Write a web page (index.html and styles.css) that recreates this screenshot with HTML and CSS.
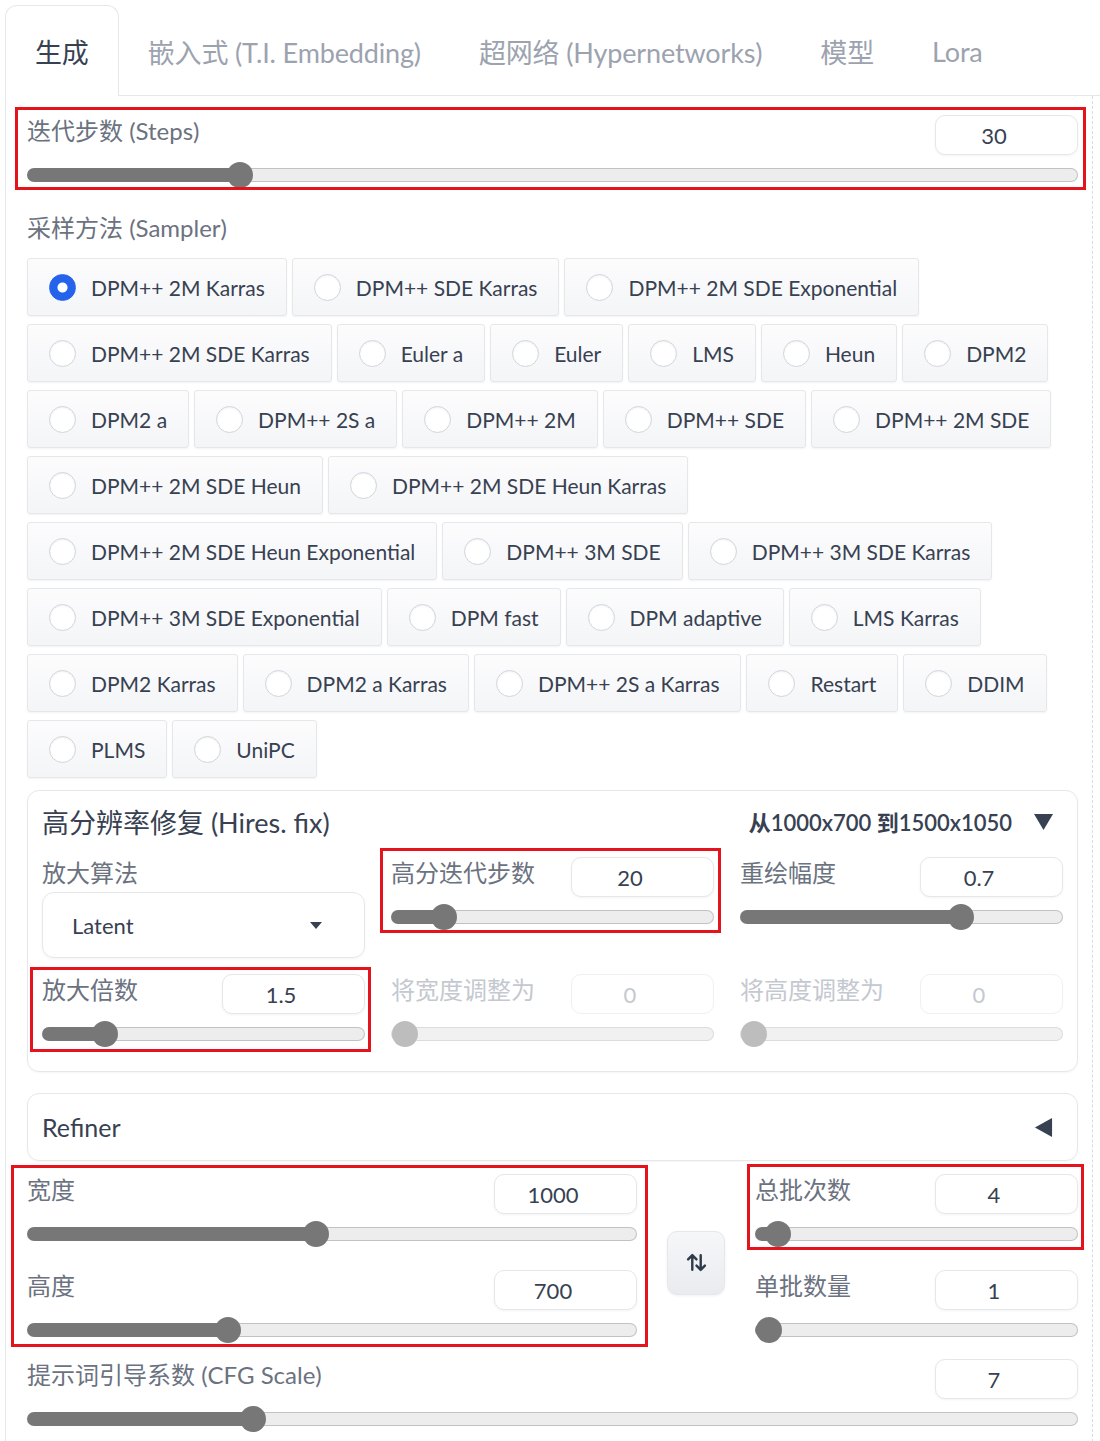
FILE: index.html
```html
<!DOCTYPE html>
<html lang="zh-CN">
  <head>
    <meta charset="UTF-8" />
    <meta name="viewport" content="width=device-width, initial-scale=1.0" />
    <title>txt2img</title>
    <link rel="stylesheet" href="styles.css">
  </head>
  <body>
    <div class="tabs">
      <button class="tab selected">生成</button>
      <button class="tab">嵌入式 (T.I. Embedding)</button>
      <button class="tab">超网络 (Hypernetworks)</button>
      <button class="tab">模型</button>
      <button class="tab">Lora</button>
    </div>

    <div class="tab-panel">
      <div class="slider-block mark mark-steps">
        <div class="slider-head">
          <span class="label">迭代步数 (Steps)</span>
          <input class="num" type="number" value="30" />
        </div>
        <input class="range" type="range" min="1" max="150" value="30" style="--f: 0.1946" />
      </div>

      <div class="label sampler-label">采样方法 (Sampler)</div>
      <div class="radios">
        <div class="radio-row">
          <label class="radio"><input type="radio" name="sampler" checked /><span>DPM++ 2M Karras</span></label>
          <label class="radio"><input type="radio" name="sampler" /><span>DPM++ SDE Karras</span></label>
          <label class="radio"><input type="radio" name="sampler" /><span>DPM++ 2M SDE Exponential</span></label>
        </div>
        <div class="radio-row">
          <label class="radio"><input type="radio" name="sampler" /><span>DPM++ 2M SDE Karras</span></label>
          <label class="radio"><input type="radio" name="sampler" /><span>Euler a</span></label>
          <label class="radio"><input type="radio" name="sampler" /><span>Euler</span></label>
          <label class="radio"><input type="radio" name="sampler" /><span>LMS</span></label>
          <label class="radio"><input type="radio" name="sampler" /><span>Heun</span></label>
          <label class="radio"><input type="radio" name="sampler" /><span>DPM2</span></label>
        </div>
        <div class="radio-row">
          <label class="radio"><input type="radio" name="sampler" /><span>DPM2 a</span></label>
          <label class="radio"><input type="radio" name="sampler" /><span>DPM++ 2S a</span></label>
          <label class="radio"><input type="radio" name="sampler" /><span>DPM++ 2M</span></label>
          <label class="radio"><input type="radio" name="sampler" /><span>DPM++ SDE</span></label>
          <label class="radio"><input type="radio" name="sampler" /><span>DPM++ 2M SDE</span></label>
        </div>
        <div class="radio-row">
          <label class="radio"><input type="radio" name="sampler" /><span>DPM++ 2M SDE Heun</span></label>
          <label class="radio"><input type="radio" name="sampler" /><span>DPM++ 2M SDE Heun Karras</span></label>
        </div>
        <div class="radio-row">
          <label class="radio"><input type="radio" name="sampler" /><span>DPM++ 2M SDE Heun Exponential</span></label>
          <label class="radio"><input type="radio" name="sampler" /><span>DPM++ 3M SDE</span></label>
          <label class="radio"><input type="radio" name="sampler" /><span>DPM++ 3M SDE Karras</span></label>
        </div>
        <div class="radio-row">
          <label class="radio"><input type="radio" name="sampler" /><span>DPM++ 3M SDE Exponential</span></label>
          <label class="radio"><input type="radio" name="sampler" /><span>DPM fast</span></label>
          <label class="radio"><input type="radio" name="sampler" /><span>DPM adaptive</span></label>
          <label class="radio"><input type="radio" name="sampler" /><span>LMS Karras</span></label>
        </div>
        <div class="radio-row">
          <label class="radio"><input type="radio" name="sampler" /><span>DPM2 Karras</span></label>
          <label class="radio"><input type="radio" name="sampler" /><span>DPM2 a Karras</span></label>
          <label class="radio"><input type="radio" name="sampler" /><span>DPM++ 2S a Karras</span></label>
          <label class="radio"><input type="radio" name="sampler" /><span>Restart</span></label>
          <label class="radio"><input type="radio" name="sampler" /><span>DDIM</span></label>
        </div>
        <div class="radio-row">
          <label class="radio"><input type="radio" name="sampler" /><span>PLMS</span></label>
          <label class="radio"><input type="radio" name="sampler" /><span>UniPC</span></label>
        </div>
      </div>

      <div class="accordion hires">
        <div class="accordion-head">
          <span class="accordion-title">高分辨率修复 (Hires. fix)</span>
          <span class="accordion-side">
            <span class="hires-size">从1000x700 到1500x1050</span>
            <svg class="toggle" viewBox="0 0 20 18"><polygon points="0,1 20,1 10,18" /></svg>
          </span>
        </div>
        <div class="hires-grid">
          <div class="field">
            <span class="label">放大算法</span>
            <div class="dropdown">
              <span>Latent</span>
              <svg class="caret" viewBox="0 0 12 7"><polygon points="0,0 12,0 6,7" /></svg>
            </div>
          </div>
          <div class="slider-block mark mark-hires-steps">
            <div class="slider-head">
              <span class="label">高分迭代步数</span>
              <input class="num" type="number" value="20" />
            </div>
            <input class="range" type="range" min="0" max="150" value="20" style="--f: 0.1333" />
          </div>
          <div class="slider-block">
            <div class="slider-head">
              <span class="label">重绘幅度</span>
              <input class="num" type="number" value="0.7" />
            </div>
            <input class="range" type="range" min="0" max="1" step="0.01" value="0.7" style="--f: 0.7" />
          </div>
          <div class="slider-block mark mark-upscale">
            <div class="slider-head">
              <span class="label">放大倍数</span>
              <input class="num" type="number" value="1.5" />
            </div>
            <input class="range" type="range" min="1" max="4" step="0.05" value="1.5" style="--f: 0.1667" />
          </div>
          <div class="slider-block disabled">
            <div class="slider-head">
              <span class="label">将宽度调整为</span>
              <input class="num" type="number" value="0" disabled />
            </div>
            <input class="range" type="range" min="0" max="2048" value="0" style="--f: 0" disabled />
          </div>
          <div class="slider-block disabled">
            <div class="slider-head">
              <span class="label">将高度调整为</span>
              <input class="num" type="number" value="0" disabled />
            </div>
            <input class="range" type="range" min="0" max="2048" value="0" style="--f: 0" disabled />
          </div>
        </div>
      </div>

      <div class="accordion refiner">
        <div class="accordion-head">
          <span class="accordion-title refiner-title">Refiner</span>
          <svg class="toggle" viewBox="0 0 18 20"><polygon points="18,0 18,20 0,10" /></svg>
        </div>
      </div>

      <div class="dims">
        <div class="stack mark mark-size">
          <div class="slider-block">
            <div class="slider-head">
              <span class="label">宽度</span>
              <input class="num" type="number" value="1000" />
            </div>
            <input class="range" type="range" min="64" max="2048" step="8" value="1000" style="--f: 0.4718" />
          </div>
          <div class="slider-block">
            <div class="slider-head">
              <span class="label">高度</span>
              <input class="num" type="number" value="700" />
            </div>
            <input class="range" type="range" min="64" max="2048" step="4" value="700" style="--f: 0.3206" />
          </div>
        </div>
        <button class="swap" title="Switch width/height">
          <svg viewBox="0 0 20 20">
            <path d="M6 17V3M2 7l4-4 4 4M14 3v14M10 13l4 4 4-4" />
          </svg>
        </button>
        <div class="stack">
          <div class="slider-block mark mark-batch">
            <div class="slider-head">
              <span class="label">总批次数</span>
              <input class="num" type="number" value="4" />
            </div>
            <input class="range" type="range" min="1" max="100" value="4" style="--f: 0.0303" />
          </div>
          <div class="slider-block">
            <div class="slider-head">
              <span class="label">单批数量</span>
              <input class="num" type="number" value="1" />
            </div>
            <input class="range" type="range" min="1" max="8" value="1" style="--f: 0" />
          </div>
        </div>
      </div>

      <div class="slider-block cfg">
        <div class="slider-head">
          <span class="label">提示词引导系数 (CFG Scale)</span>
          <input class="num" type="number" value="7" />
        </div>
        <input class="range" type="range" min="1" max="30" step="0.5" value="7" style="--f: 0.2069" />
      </div>
    </div>
  </body>
</html>
```

FILE: styles.css
```css
* {
  margin: 0;
  padding: 0;
  box-sizing: border-box;
}

body {
  width: 1100px;
  padding-top: 5px;
  background: #fff;
  color: #374151;
  font-family: Lato, "Noto Sans CJK SC", sans-serif;
}

button,
input {
  font-family: inherit;
  color: inherit;
}

/* tabs */

.tabs {
  display: flex;
  height: 91px;
  margin-left: 5px;
  border-bottom: 1px solid #e5e7eb;
}

.tab {
  height: 91px;
  margin-bottom: -1px;
  padding: 0 28px;
  border: 1px solid transparent;
  border-bottom: none;
  border-radius: 12px 12px 0 0;
  background: none;
  font-size: 27px;
  letter-spacing: -0.15px;
  color: #9ca3af;
}

.tab.selected {
  padding: 0 29px;
  border-color: #e5e7eb;
  background: #fff;
  color: #374151;
}

.tab-panel {
  width: 1088px;
  margin-left: 5px;
  padding: 19px 14px 10px 21px;
  border-left: 1px solid #e5e7eb;
  border-right: 1px dashed #d9dbe0;
}

/* labels, number boxes and sliders */

.label {
  font-size: 24px;
  line-height: 32px;
  color: #6b7280;
  white-space: nowrap;
}

.slider-block {
  padding-bottom: 6px;
}

.slider-head {
  display: flex;
  justify-content: space-between;
  align-items: flex-start;
}

.num {
  width: 143px;
  height: 40px;
  padding-right: 25px;
  border: 1px solid #e5e7eb;
  border-radius: 10px;
  background: #fff;
  box-shadow: 0 1px 3px rgba(0, 0, 0, 0.05);
  font-size: 22px;
  text-align: center;
  outline: none;
}

.num::-webkit-inner-spin-button,
.num::-webkit-outer-spin-button {
  -webkit-appearance: none;
  margin: 0;
}

.range {
  --fill: calc(14px + (100% - 28px) * var(--f));
  -webkit-appearance: none;
  appearance: none;
  display: block;
  width: 100%;
  height: 14px;
  margin-top: 13px;
  border: 1px solid transparent;
  border-radius: 7px;
  background:
    linear-gradient(#777, #777) 0 0 / var(--fill) 100% no-repeat border-box,
    linear-gradient(#ededed, #ededed) padding-box,
    linear-gradient(#c2c2c2, #c2c2c2) border-box;
  outline: none;
}

.range::-webkit-slider-thumb {
  -webkit-appearance: none;
  width: 26px;
  height: 26px;
  margin-top: -1px;
  border-radius: 50%;
  background: #777;
}

.disabled .label,
.disabled .num {
  color: #c4c8cf;
}

.disabled .num {
  border-color: #eef0f2;
  box-shadow: none;
}

.disabled .range {
  background:
    linear-gradient(#f1f1f1, #f1f1f1) padding-box,
    linear-gradient(#dcdcdc, #dcdcdc) border-box;
}

.disabled .range::-webkit-slider-thumb {
  background: #bdbdbd;
}

/* sampler */

.sampler-label {
  margin: 24px 0 14px;
}

.radios {
  display: flex;
  flex-direction: column;
  gap: 8px;
}

.radio-row {
  display: flex;
  gap: 5px;
}

.radio {
  display: flex;
  align-items: center;
  gap: 15px;
  height: 58px;
  padding: 0 21px;
  border: 1px solid #e5e7eb;
  border-radius: 3px;
  background: linear-gradient(#fcfcfd, #f4f5f7);
  box-shadow: 0 1px 2px rgba(0, 0, 0, 0.05);
  font-size: 21px;
  color: #374151;
  white-space: nowrap;
}

.radio input {
  -webkit-appearance: none;
  appearance: none;
  width: 27px;
  height: 27px;
  border: 1px solid #d1d5db;
  border-radius: 50%;
  background: #fff;
  box-shadow: inset 0 1px 2px rgba(0, 0, 0, 0.06);
}

.radio input:checked {
  border-color: #2563eb;
  background: radial-gradient(circle, #fff 0 4.5px, #2563eb 5.5px);
  box-shadow: none;
}

/* accordions */

.accordion {
  border: 1px solid #e5e7eb;
  border-radius: 12px;
  box-shadow: 0 1px 2px rgba(0, 0, 0, 0.04);
}

.accordion-head {
  display: flex;
  justify-content: space-between;
  align-items: center;
}

.accordion-title {
  font-size: 27px;
  color: #374151;
}

.accordion-side {
  display: flex;
  align-items: center;
  gap: 22px;
}

.hires-size {
  font-size: 22px;
  font-weight: 600;
  color: #374151;
}

.toggle {
  width: 19px;
  height: 19px;
  fill: #374151;
}

.hires {
  margin-top: 12px;
  padding: 12px 14px 24px;
}

.hires .accordion-head {
  height: 36px;
  padding-right: 10px;
}

.hires-grid {
  display: grid;
  grid-template-columns: repeat(3, 1fr);
  align-items: start;
  gap: 16px 26px;
  margin-top: 18px;
}

.dropdown {
  display: flex;
  justify-content: space-between;
  align-items: center;
  height: 66px;
  margin-top: 3px;
  padding: 0 42px 0 29px;
  border: 1px solid #e5e7eb;
  border-radius: 12px;
  box-shadow: 0 1px 3px rgba(0, 0, 0, 0.05);
  font-size: 22px;
}

.caret {
  width: 12px;
  height: 7px;
  fill: #374151;
}

.refiner {
  height: 68px;
  margin-top: 21px;
  padding: 0 24px 0 14px;
}

.refiner .accordion-head {
  height: 100%;
}

.refiner-title {
  font-size: 25px;
}

/* width / height / batch */

.dims {
  display: grid;
  grid-template-columns: 1fr 58px 323px;
  column-gap: 30px;
  margin-top: 13px;
}

.stack {
  display: flex;
  flex-direction: column;
  gap: 23px;
}

.swap {
  align-self: center;
  display: flex;
  align-items: center;
  justify-content: center;
  height: 64px;
  margin-top: 8px;
  border: 1px solid #e5e7eb;
  border-radius: 10px;
  background: linear-gradient(#f6f7f9, #e9ebef);
  box-shadow: 0 1px 3px rgba(0, 0, 0, 0.06);
}

.swap svg {
  width: 21px;
  height: 21px;
  fill: none;
  stroke: #2f3a4a;
  stroke-width: 2.3;
  stroke-linecap: round;
  stroke-linejoin: round;
}

.cfg {
  margin-top: 16px;
}

/* red annotation boxes drawn over the controls */

.mark {
  position: relative;
}

.mark::after {
  content: "";
  position: absolute;
  border: 3px solid #e3141c;
  pointer-events: none;
}

.mark-steps::after {
  top: -8px;
  right: -8px;
  bottom: -2px;
  left: -12px;
}

.mark-hires-steps::after {
  top: -9px;
  right: -7px;
  bottom: -3px;
  left: -11px;
}

.mark-upscale::after {
  top: -7px;
  right: -6px;
  bottom: -5px;
  left: -12px;
}

.mark-size::after {
  top: -9px;
  right: -11px;
  bottom: -4px;
  left: -16px;
}

.mark-batch::after {
  top: -10px;
  right: -6px;
  bottom: -3px;
  left: -8px;
}
```
